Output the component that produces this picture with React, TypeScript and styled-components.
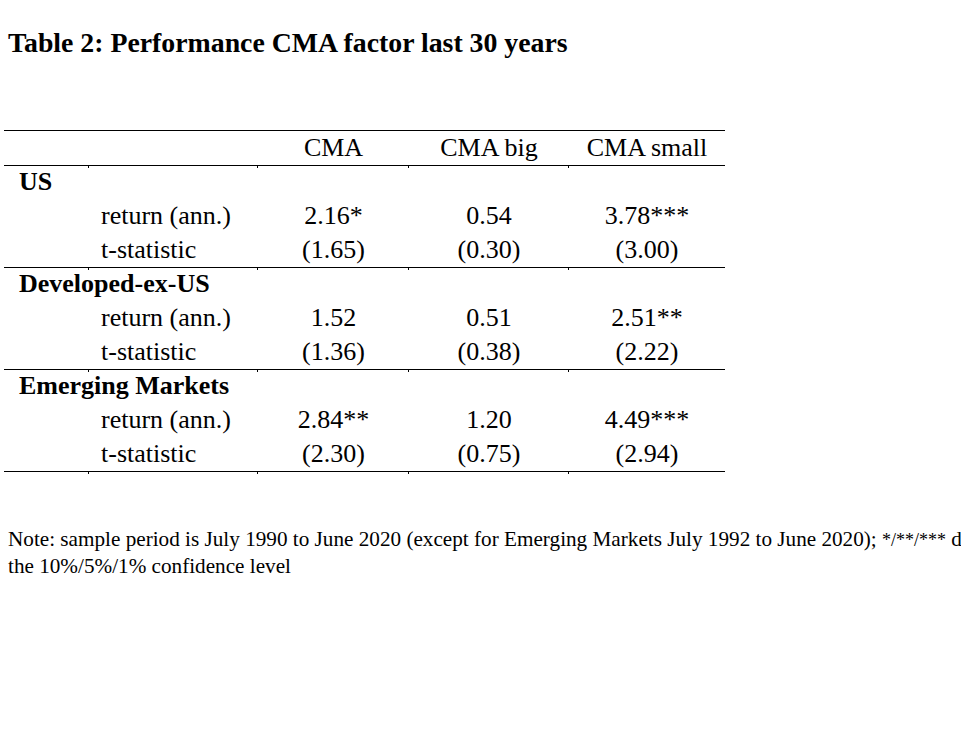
import styled, { createGlobalStyle } from "styled-components";

type Row = { label: string; values: string[] };
type Section = { name: string; rows: Row[] };

const columns = ["CMA", "CMA big", "CMA small"];

const sections: Section[] = [
    {
        name: "US",
        rows: [
            { label: "return (ann.)", values: ["2.16*", "0.54", "3.78***"] },
            { label: "t-statistic", values: ["(1.65)", "(0.30)", "(3.00)"] },
        ],
    },
    {
        name: "Developed-ex-US",
        rows: [
            { label: "return (ann.)", values: ["1.52", "0.51", "2.51**"] },
            { label: "t-statistic", values: ["(1.36)", "(0.38)", "(2.22)"] },
        ],
    },
    {
        name: "Emerging Markets",
        rows: [
            { label: "return (ann.)", values: ["2.84**", "1.20", "4.49***"] },
            { label: "t-statistic", values: ["(2.30)", "(0.75)", "(2.94)"] },
        ],
    },
];

function App() {
    return (
        <>
            <GlobalStyle />
            <Page>
                <Title>Table 2: Performance CMA factor last 30 years</Title>

                <Table>
                    <colgroup>
                        <col style={{ width: 85 }} />
                        <col style={{ width: 169 }} />
                        <col style={{ width: 151 }} />
                        <col style={{ width: 160 }} />
                        <col style={{ width: 156 }} />
                    </colgroup>
                    <thead>
                        <tr>
                            <Cell $tick={false} />
                            <Cell $tick />
                            {columns.map((c) => (
                                <HeadCell key={c} $tick>
                                    {c}
                                </HeadCell>
                            ))}
                        </tr>
                    </thead>
                    {sections.map((s) => (
                        <Body key={s.name}>
                            <tr>
                                <GroupCell colSpan={5}>{s.name}</GroupCell>
                            </tr>
                            {s.rows.map((r, i) => (
                                <tr key={r.label}>
                                    <Cell $tick={false} />
                                    <LabelCell $tick={i === s.rows.length - 1}>{r.label}</LabelCell>
                                    {r.values.map((v, j) => (
                                        <ValueCell key={j} $tick={i === s.rows.length - 1}>
                                            {v}
                                        </ValueCell>
                                    ))}
                                </tr>
                            ))}
                        </Body>
                    ))}
                </Table>

                <Note>
                    Note: sample period is July 1990 to June 2020 (except for Emerging Markets July 1992 to
                    June 2020); <Stars>*/**/***</Stars> denote significance at
                    <br />
                    the 10%/5%/1% confidence level
                </Note>
            </Page>
        </>
    );
}

export default App;

// --- Styled Components ---

const GlobalStyle = createGlobalStyle`
    html, body {
        margin: 0;
        padding: 0;
        background: #ffffff;
        overflow: hidden;
    }
`;

const Page = styled.div`
    width: 961px;
    height: 746px;
    padding: 0 0 0 4px;
    box-sizing: border-box;
    font-family: "Liberation Serif", "Times New Roman", serif;
    color: #000000;
    overflow: hidden;
`;

const Title = styled.h1`
    margin: 27px 0 0 4px;
    font-size: 27.8px;
    line-height: 32px;
    font-weight: 700;
`;

const Table = styled.table`
    margin-top: 71px;
    width: 721px;
    table-layout: fixed;
    border-collapse: collapse;
    border-top: 1px solid #000;
    border-bottom: 1px solid #000;
    font-size: 26px;

    thead tr {
        border-bottom: 1px solid #000;
    }
`;

const Body = styled.tbody`
    & + & {
        border-top: 1px solid #000;
    }
`;

const Cell = styled.td<{ $tick: boolean }>`
    position: relative;
    height: 33.67px;
    padding: 0;
    white-space: nowrap;
    vertical-align: middle;

    /* small cell-border marks left on the rules */
    &::after {
        content: "";
        display: ${({ $tick }) => ($tick ? "block" : "none")};
        position: absolute;
        left: -1px;
        bottom: -3px;
        width: 1px;
        height: 2px;
        background: #000;
    }
`;

const HeadCell = styled(Cell)`
    text-align: center;
    font-weight: 400;
`;

const GroupCell = styled.td`
    height: 33.67px;
    padding: 0 0 0 15px;
    font-weight: 700;
    white-space: nowrap;
`;

const LabelCell = styled(Cell)`
    padding-left: 12px;
`;

const ValueCell = styled(Cell)`
    text-align: center;
`;

const Note = styled.p`
    margin: 54px 0 0 4px;
    font-size: 21.2px;
    line-height: 26px;
    white-space: nowrap;
`;

const Stars = styled.span`
    font-size: 18px;
`;
